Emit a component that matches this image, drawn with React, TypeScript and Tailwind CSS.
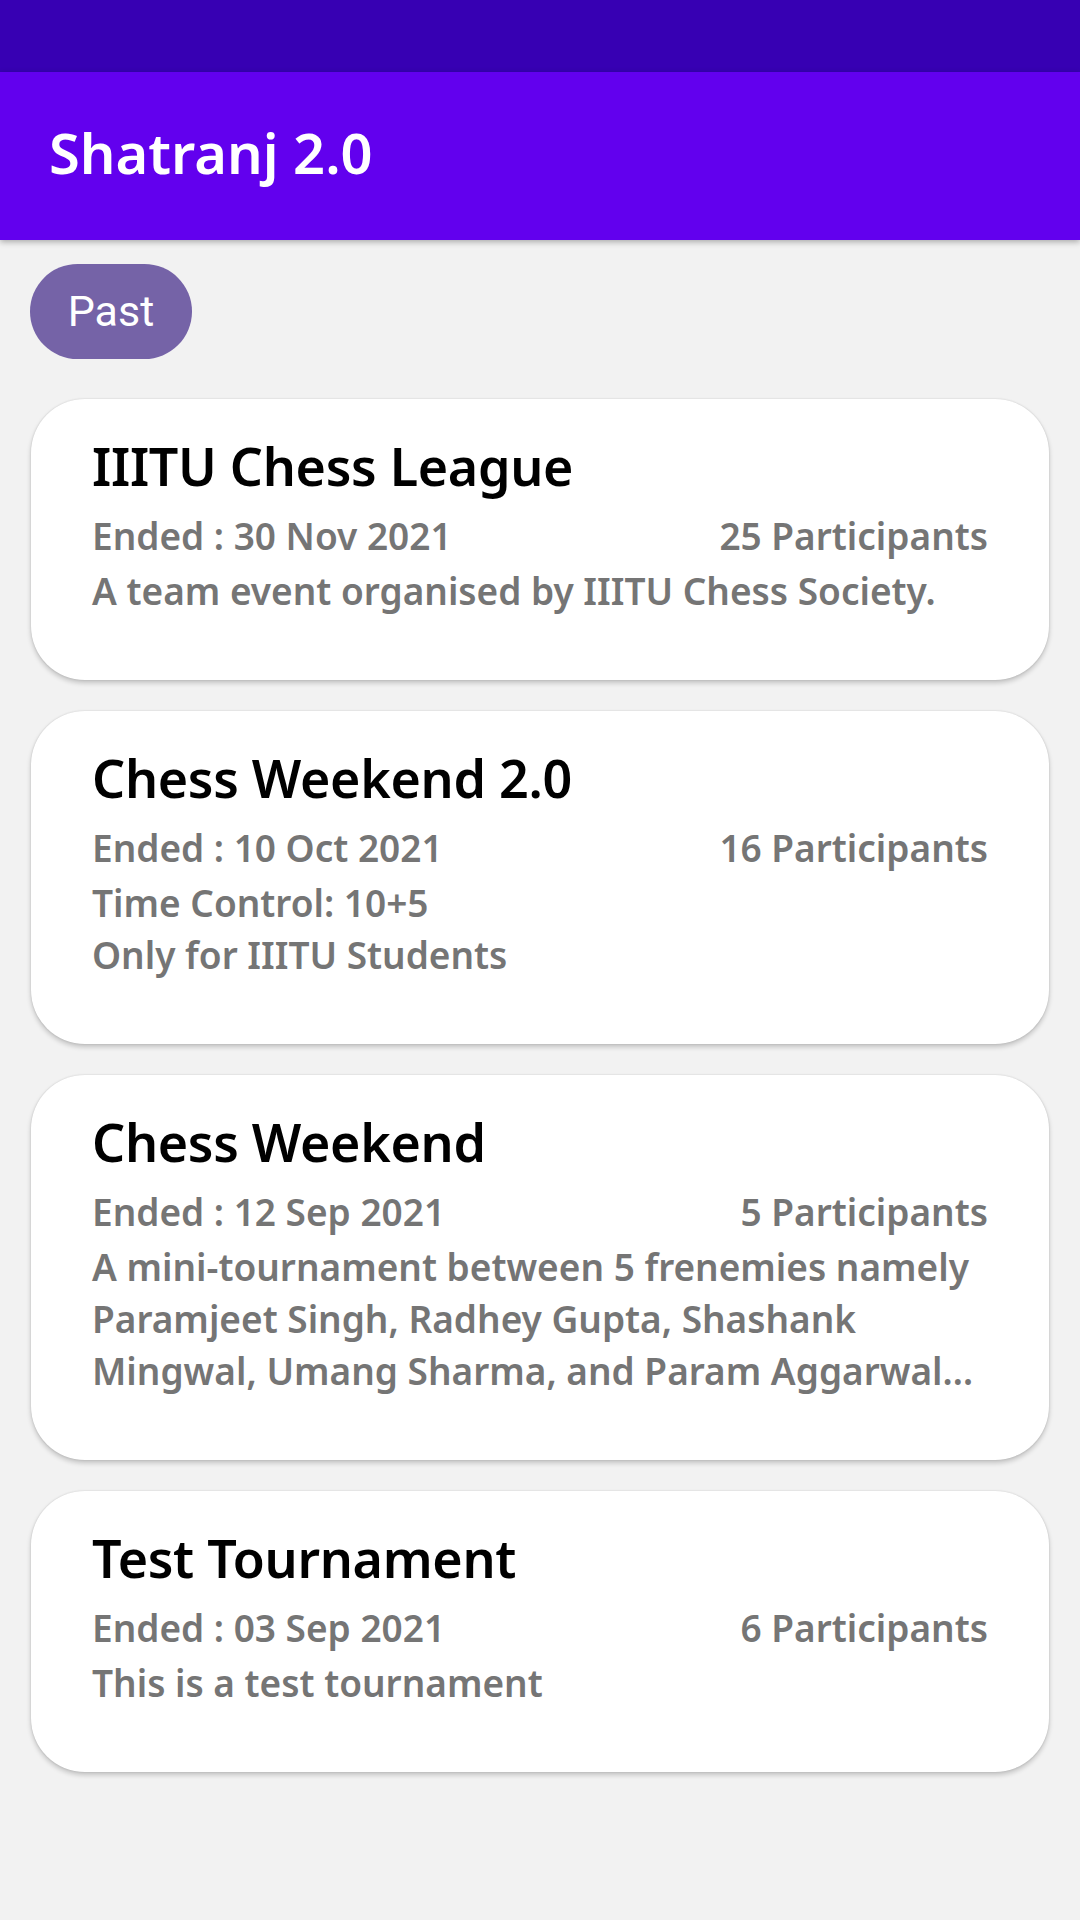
import React from "react";

type Tournament = {
  title: string;
  ended: string;
  participants: string;
  lines: string[];
};

const tournaments: Tournament[] = [
  {
    title: "IIITU Chess League",
    ended: "Ended : 30 Nov 2021",
    participants: "25 Participants",
    lines: ["A team event organised by IIITU Chess Society."],
  },
  {
    title: "Chess Weekend 2.0",
    ended: "Ended : 10 Oct 2021",
    participants: "16 Participants",
    lines: ["Time Control: 10+5", "Only for IIITU Students"],
  },
  {
    title: "Chess Weekend",
    ended: "Ended : 12 Sep 2021",
    participants: "5 Participants",
    lines: [
      "A mini-tournament between 5 frenemies namely",
      "Paramjeet Singh, Radhey Gupta, Shashank",
      "Mingwal, Umang Sharma, and Param Aggarwal\u2026",
    ],
  },
  {
    title: "Test Tournament",
    ended: "Ended : 03 Sep 2021",
    participants: "6 Participants",
    lines: ["This is a test tournament"],
  },
];

function Card({ t }: { t: Tournament }) {
  return (
    <div className="rounded-[54px] bg-white px-[61px] pt-[35px] pb-[63px] shadow-[0_0_2px_rgba(0,0,0,0.14),0_3px_5px_rgba(0,0,0,0.2)]">
      <div className="text-[52px] leading-[64px] font-semibold tracking-[-0.3px] text-black whitespace-nowrap">
        {t.title}
      </div>
      <div className="mt-[12px] flex justify-between text-[37px] leading-[51px] font-semibold text-[#757575] whitespace-nowrap">
        <span>{t.ended}</span>
        <span>{t.participants}</span>
      </div>
      <div className="mt-[4px] text-[37px] leading-[52px] font-semibold text-[#757575]">
        {t.lines.map((l, i) => (
          <div key={i} className="whitespace-nowrap">
            {l}
          </div>
        ))}
      </div>
    </div>
  );
}

export default function App() {
  return (
    <div
      className="min-h-[1920px] w-[1080px] bg-[#f2f2f2]"
      style={{ fontFamily: '"Noto Sans", "Open Sans", sans-serif' }}
    >
      <div className="h-[72px] bg-[#3700b3]" />
      <div className="relative z-10 h-[168px] bg-[#6200ee] pl-[49px] pt-[52px] shadow-[0_2px_6px_rgba(0,0,0,0.3)]">
        <div className="text-[56px] leading-[56px] font-semibold text-white whitespace-nowrap">
          Shatranj 2.0
        </div>
      </div>
      <div className="pl-[30px] pt-[24px]">
        <div
          className="flex h-[95px] w-[162px] items-center justify-center rounded-full bg-[#7563a7] text-[43px] leading-[43px] text-white"
          style={{ fontFamily: "Roboto, sans-serif" }}
        >
          Past
        </div>
      </div>
      <div className="mt-[40px] flex flex-col gap-[31px] px-[31px]">
        {tournaments.map((t) => (
          <Card key={t.title} t={t} />
        ))}
      </div>
    </div>
  );
}
